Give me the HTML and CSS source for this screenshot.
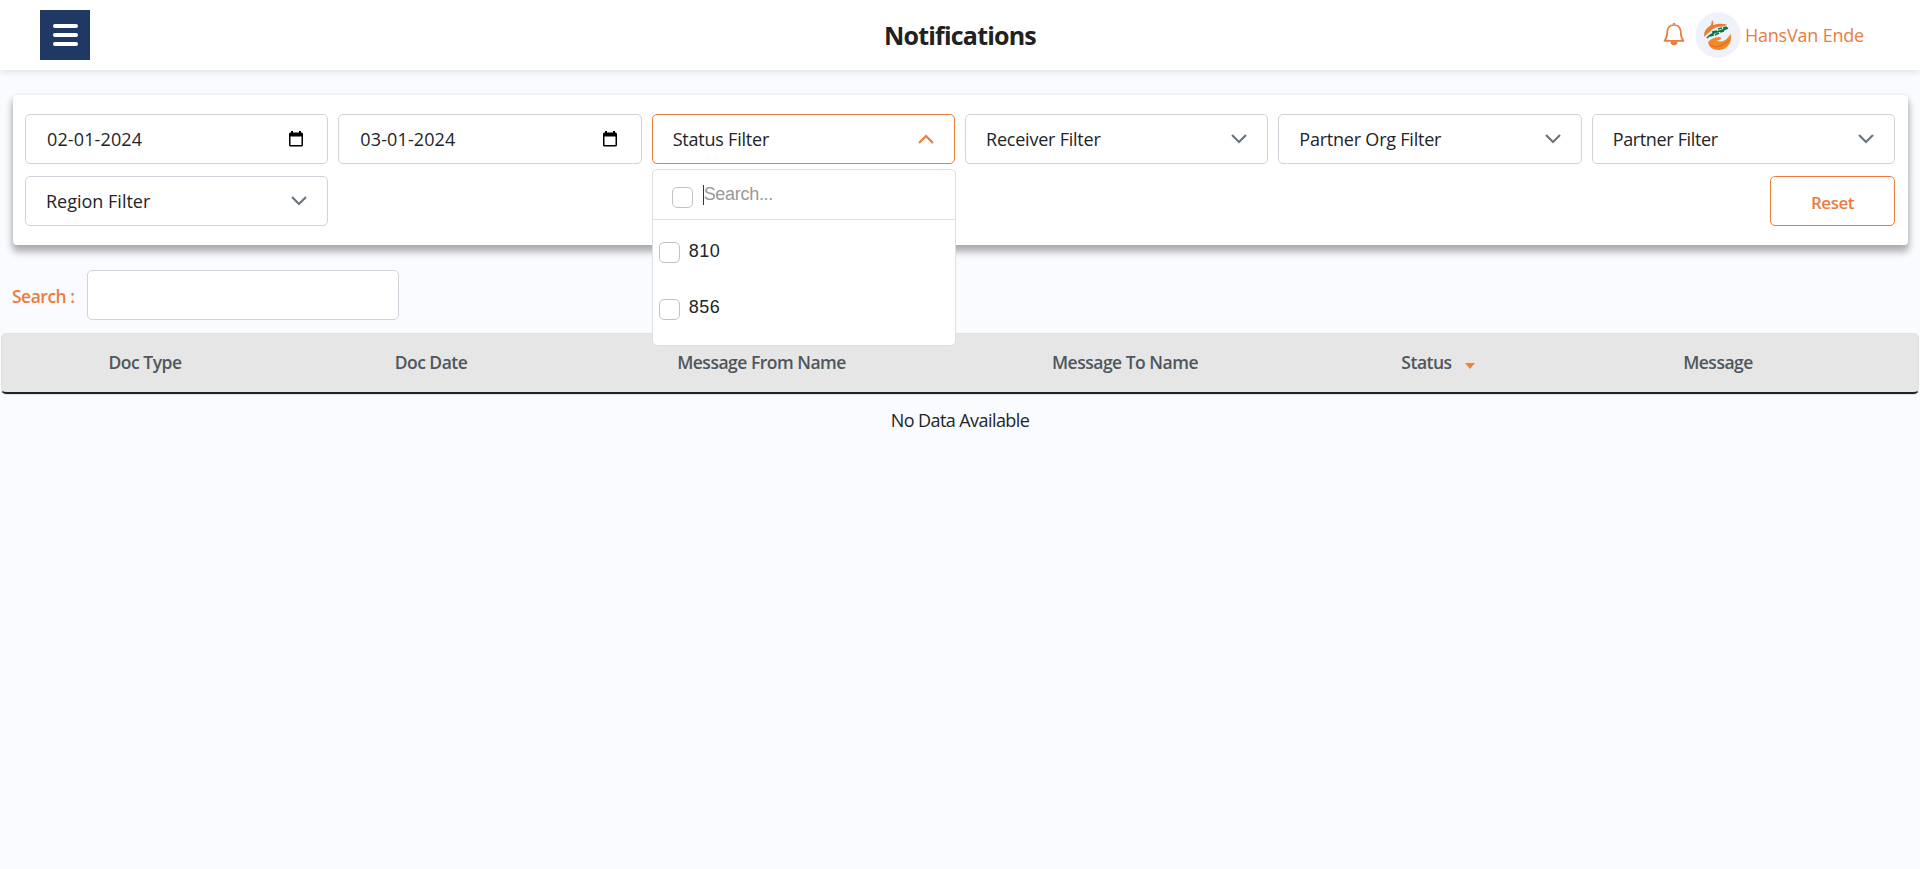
FILE: index.html
```html
<!DOCTYPE html>
<html lang="en">
<head>
<meta charset="utf-8">
<title>Notifications</title>
<link rel="stylesheet" href="styles.css">
</head>
<body>
<header class="topbar">
  <button class="menu" aria-label="Menu"><span></span><span></span><span></span></button>
  <h1 class="title">Notifications</h1>
  <div class="user">
    <svg class="bell" width="22" height="24" viewBox="0 0 22 24"><path d="M1.500 18.800C4.600 15.500 3.900 12 4.400 8.700C5 5 7.600 3 11 3s6 2 6.600 5.700C18.100 12 17.400 15.500 20.500 18.800z" fill="none" stroke="#ea7c3c" stroke-width="1.700" stroke-linejoin="round"/><path d="M9.500 2.500a1.500 1.800 0 0 1 3 0zM7.500 19.500h7a3.500 3.800 0 0 1-7 0z" fill="#ea7c3c"/></svg>
    <svg class="avatar" width="46" height="46" viewBox="0 0 46 46">
      <circle cx="23" cy="23" r="22.700" fill="#eff2fa"/>
      <path d="M9.500 25C8 20 11.500 16 16 13L17 8.200Q18.700 8.500 18.300 13.200C23 11.500 27 11.500 32 12.600Q30 14.800 25 14.800C19 15.500 17 17.500 14 20.500Q11 22 9.500 25z" fill="#ed7d2d"/>
      <path d="M13 30Q17 25.500 24 25Q26.500 25 26 27Q25 28.300 21.500 28.800Q27 30.500 31 27.500Q33.500 25 35.800 22C37.500 28 34 36.500 26 37.800C19 38.700 14 36 13 30z" fill="#f18a25"/>
      <path d="M15 33Q24 38 34 28" fill="none" stroke="#e8702a" stroke-width="1.500"/>
      <path d="M12 26Q17 21 23 19.500T33 16M15 24l4-1M17 20l5-1M20 23l4-2M23 17l4-1M25 20l4-1M28 16l4-1" fill="none" stroke="#12714b" stroke-width="1.600"/>
    </svg>
    <span class="username">HansVan Ende</span>
  </div>
</header>

<main>
  <section class="filters">
    <div class="field date"><span>02-01-2024</span><svg class="cal" width="14" height="16" viewBox="0 0 14 16"><path fill-rule="evenodd" d="M2 0h2v1.500h6V0h2v1.500h.500q1.500 0 1.500 1.500v11q0 1.500-1.500 1.500h-11Q0 15.500 0 14V3q0-1.500 1.500-1.500H2zM1.500 5.500v8.500h11V5.500z"/></svg></div>
    <div class="field date"><span>03-01-2024</span><svg class="cal" width="14" height="16" viewBox="0 0 14 16"><path fill-rule="evenodd" d="M2 0h2v1.500h6V0h2v1.500h.500q1.500 0 1.500 1.500v11q0 1.500-1.500 1.500h-11Q0 15.500 0 14V3q0-1.500 1.500-1.500H2zM1.500 5.500v8.500h11V5.500z"/></svg></div>
    <div class="field active"><span>Status Filter</span><svg class="chev" width="16" height="10" viewBox="0 0 16 10"><path d="M1 9l7-7 7 7"/></svg>
      <div class="dropdown">
        <div class="dropdown-head"><i class="check"></i><span class="placeholder">Search...</span></div>
        <div class="option"><i class="check"></i><span>810</span></div>
        <div class="option"><i class="check"></i><span>856</span></div>
      </div>
    </div>
    <div class="field"><span>Receiver Filter</span><svg class="chev" width="16" height="10" viewBox="0 0 16 10"><path d="M1 1l7 7 7-7"/></svg></div>
    <div class="field"><span>Partner Org Filter</span><svg class="chev" width="16" height="10" viewBox="0 0 16 10"><path d="M1 1l7 7 7-7"/></svg></div>
    <div class="field partner"><span>Partner Filter</span><svg class="chev" width="16" height="10" viewBox="0 0 16 10"><path d="M1 1l7 7 7-7"/></svg></div>
    <div class="field region"><span>Region Filter</span><svg class="chev" width="16" height="10" viewBox="0 0 16 10"><path d="M1 1l7 7 7-7"/></svg></div>
    <button class="reset">Reset</button>
  </section>

  <div class="search"><label class="search-label" for="q">Search :</label><input class="search-input" id="q" type="text"></div>

  <div class="table-head">
    <span>Doc Type</span><span>Doc Date</span><span>Message From Name</span><span>Message To Name</span><span class="sorted">Status<i class="arrow"></i></span><span>Message</span>
  </div>
  <p class="empty">No Data Available</p>
</main>
</body>
</html>
```
FILE: styles.css
```css
* { box-sizing: border-box; }
body {
  margin: 0;
  min-height: 869px;
  background: #fafbff;
  color: #212529;
  font: 18px/27px "Open Sans", "Noto Sans", sans-serif;
}
.topbar {
  height: 70px;
  padding: 0 56px 0 40px;
  background: #fff;
  box-shadow: 0 2px 6px rgba(40, 45, 70, .12);
  display: grid;
  grid-template-columns: 1fr auto 1fr;
  align-items: center;
}
.menu {
  width: 50px;
  height: 50px;
  padding: 0 0 0 1px;
  border: 0;
  background: #203864;
  display: flex;
  flex-direction: column;
  align-items: center;
  justify-content: center;
  gap: 5px;
}
.menu span { width: 25px; height: 4px; border-radius: 2px; background: #fff; }
.title {
  margin: 0 0 0 16px;
  font-size: 25px;
  line-height: 34px;
  font-weight: 700;
  letter-spacing: -.8px;
  color: #212121;
}
.user { display: flex; align-items: center; justify-content: flex-end; color: #ea7c3c; }
.bell { margin: -3px 10px 0 0; }
.username { margin: 1px 0 0 4px; white-space: nowrap; letter-spacing: -.2px; }
.filters {
  margin: 25px 12px 0 13px;
  height: 150px;
  padding: 19px 13px 19px 12px;
  border-radius: 4px;
  background: #fff;
  box-shadow: 0 6px 7px 1px rgba(0, 0, 0, .3), 0 0 4px rgba(0, 0, 0, .08);
  display: grid;
  grid-template-columns: repeat(6, 1fr);
  grid-auto-rows: 50px;
  gap: 12px 10px;
}
.field {
  position: relative;
  padding: 0 20px;
  border: 1px solid #ced4da;
  border-radius: 5px;
  background: #fff;
  display: flex;
  align-items: center;
  justify-content: space-between;
  letter-spacing: -.22px;
}
.partner { letter-spacing: -.35px; }
.region { letter-spacing: 0; }
.date { padding: 0 24px 0 21px; letter-spacing: .12px; }
.chev { fill: none; stroke: #6c757d; stroke-width: 2.2; }
.active { border-color: #ea7c3c; }
.active .chev { stroke: #ea7c3c; }
.dropdown {
  position: absolute;
  z-index: 2;
  top: 54px;
  left: -1px;
  width: 304px;
  height: 177px;
  border: 1px solid #dadfe5;
  border-radius: 5px;
  background: #fff;
  font-family: "Liberation Sans", Arial, sans-serif;
  letter-spacing: 0;
}
.dropdown-head { height: 50px; padding: 17px 19px 0; border-bottom: 1px solid #dadfe5; display: flex; }
.check { flex: none; width: 21px; height: 21px; border: 1px solid #bdc3c9; border-radius: 5px; }
.placeholder {
  margin: -2px 0 0 10px;
  height: 20px;
  border-left: 1px solid #333;
  line-height: 18px;
  letter-spacing: -.3px;
  color: #999;
}
.option { height: 57px; padding: 22px 5px 0 6px; display: flex; }
.option span { margin: -4px 0 0 9px; letter-spacing: .5px; }
.option + .option span { margin-top: -5px; }
.reset {
  grid-column: 6;
  justify-self: end;
  width: 125px;
  border: 1px solid #ea7c3c;
  border-radius: 5px;
  background: #fff;
  color: #ea7c3c;
  font: 600 17px/27px "Open Sans", sans-serif;
  letter-spacing: -.5px;
  padding: 3px 0 0;
}
.search { margin: 25px 0 0 12px; display: flex; align-items: center; }
.search-label { width: 75px; padding-top: 2px; color: #ea7c3c; font-size: 17.5px; font-weight: 600; letter-spacing: -.5px; }
.search-input { width: 312px; height: 50px; border: 1px solid #ced4da; border-radius: 5px; background: #fff; }
.table-head {
  height: 61px;
  margin: 13px 1px 0;
  border: 1px solid #dee2e6;
  border-bottom: 2px solid #212529;
  border-radius: 5px;
  background: #e6e6e6;
  box-shadow: 0 1px #dee2e6;
  color: #4f575e;
  font-size: 17.5px;
  font-weight: 600;
  letter-spacing: -.5px;
  display: grid;
  grid-template-columns: 286px 286px 375px 352px 274px 286px 1fr;
  text-align: center;
  line-height: 57px;
}
.sorted { display: flex; align-items: flex-start; justify-content: center; }
.arrow {
  margin: 29px 0 0 13px;
  border: 5.5px solid transparent;
  border-top: 6.5px solid #f58233;
  border-bottom: 0;
}
.empty { margin: 13px 0 0; text-align: center; letter-spacing: -.58px; }
```
